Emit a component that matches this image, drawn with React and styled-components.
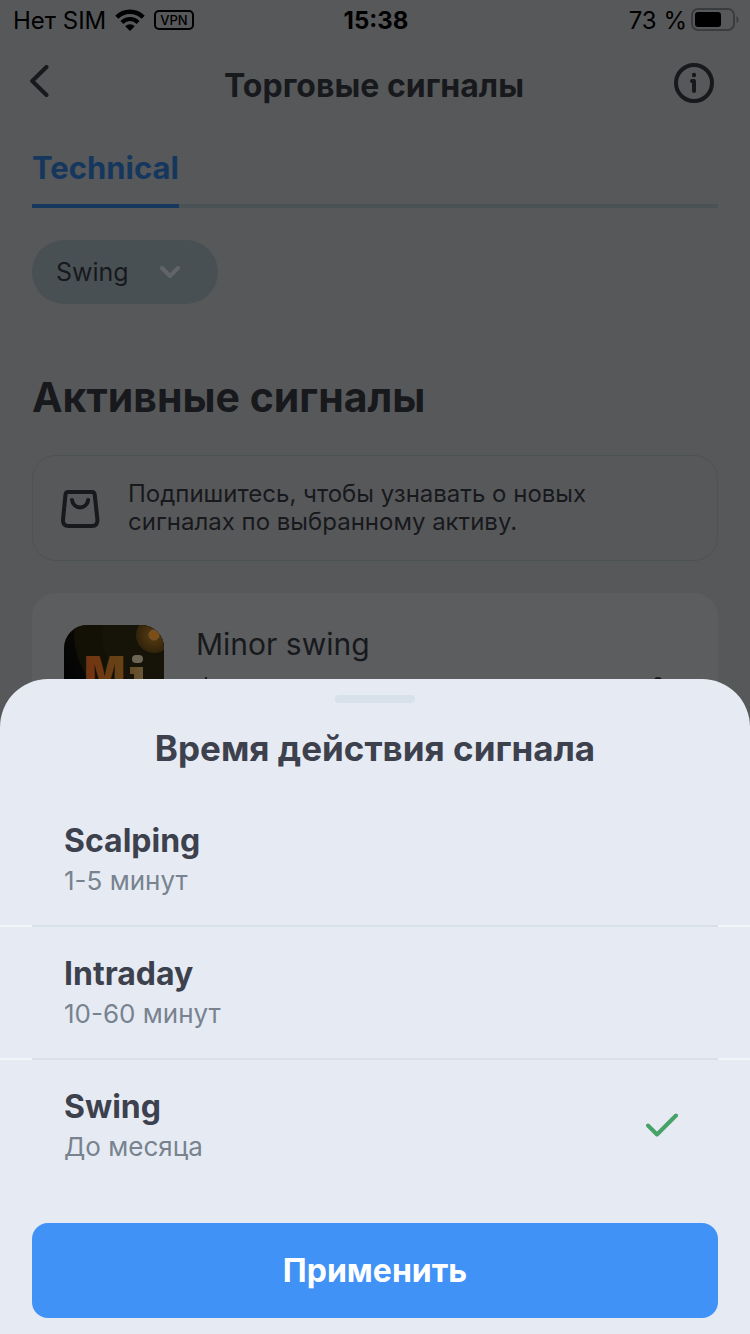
import React, { useState } from "react";
import styled, { createGlobalStyle } from "styled-components";

const GlobalStyle = createGlobalStyle`
  *, *::before, *::after { box-sizing: border-box; }
  html, body { margin: 0; padding: 0; background: #57585a; }
  body { font-family: Inter, "Noto Sans", sans-serif; color: #17191d; }
  h1, h2, h3, p { margin: 0; }
  button, select { font-family: inherit; }
`;

const Screen = styled.div`
  height: 100vh;
  overflow: hidden;
  display: flex;
  flex-direction: column;
`;

const StatusBar = styled.div`
  display: grid;
  grid-template-columns: 1fr auto 1fr;
  align-items: center;
  height: 40px;
  padding: 0 11px 0 13px;
  color: #000;
  font-size: 24px;
  line-height: 30px;
`;

const StatusGroup = styled.div`
  display: flex;
  align-items: center;
  justify-content: ${(p) => (p.$end ? "flex-end" : "flex-start")};
  gap: ${(p) => (p.$end ? 4 : 9)}px;

  span {
    padding-top: 1px;
  }
`;

const Clock = styled.time`
  padding-top: 1px;
  font-weight: 700;
`;

const VpnBadge = styled.b`
  display: flex;
  align-items: center;
  height: 20px;
  padding: 0 4px;
  border: 2px solid #000;
  border-radius: 5px;
  font-size: 13px;
  font-weight: 500;
`;

const Header = styled.header`
  display: grid;
  grid-template-columns: 48px 1fr 48px;
  align-items: center;
  height: 86px;
  padding: 0 32px 0 30px;
`;

const IconButton = styled.button`
  display: flex;
  align-items: center;
  justify-content: ${(p) => (p.$end ? "flex-end" : "flex-start")};
  height: 48px;
  padding: 0 4px 0 0;
  border: 0;
  background: none;
  color: #17191d;

  svg {
    flex: none;
  }
`;

const PageTitle = styled.h1`
  padding-top: 5px;
  text-align: center;
  font-size: 32px;
  line-height: 40px;
  font-weight: 700;
`;

const Tabs = styled.nav`
  display: flex;
  margin: 0 32px;
  height: 82px;
  box-shadow: inset 0 -4px #4b5255;
`;

const Tab = styled.a`
  display: flex;
  align-items: center;
  padding-top: 6px;
  border-bottom: 4px solid #15375e;
  color: #15375e;
  font-size: 31px;
  line-height: 40px;
  font-weight: 700;
  text-decoration: none;
`;

const Filter = styled.label`
  display: grid;
  align-items: center;
  width: 186px;
  height: 64px;
  margin: 32px 32px 0;
  border-radius: 32px;
  background: #495054;

  select,
  svg {
    grid-area: 1 / 1;
  }

  svg {
    justify-self: end;
    margin-right: 37px;
    pointer-events: none;
  }
`;

const FilterSelect = styled.select`
  appearance: none;
  width: 100%;
  height: 64px;
  padding: 0 24px;
  border: 0;
  border-radius: 32px;
  background: none;
  color: #17191d;
  font-size: 25px;
`;

const SectionTitle = styled.h2`
  margin: 68px 32px 32px;
  font-size: 41px;
  line-height: 51px;
  font-weight: 700;
`;

const Notice = styled.section`
  display: flex;
  align-items: center;
  gap: 28px;
  height: 106px;
  flex: none;
  margin: 0 32px;
  padding: 0 28px;
  border: 1px solid #4c5356;
  border-radius: 24px;
  font-size: 24px;
  line-height: 28px;

  p {
    max-width: 480px;
  }
`;

const SignalCard = styled.article`
  display: flex;
  gap: 32px;
  flex: none;
  height: 164px;
  margin: 32px 32px 0;
  padding: 32px;
  border-radius: 24px;
  background: #5c5d5f;
`;

const SignalBody = styled.div`
  display: flex;
  flex-direction: column;
  gap: 13px;
  flex: 1;
`;

const SignalName = styled.h3`
  font-size: 30px;
  line-height: 39px;
  font-weight: 400;
`;

const SignalMeta = styled.div`
  display: flex;
  justify-content: space-between;
  padding: 0 24px 0 8px;
`;

const Sheet = styled.form`
  position: fixed;
  left: 0;
  right: 0;
  bottom: 0;
  display: flex;
  flex-direction: column;
  padding: 16px 0;
  border-radius: 48px 48px 0 0;
  background: #e6ebf3;
  color: #3d414d;
`;

const Handle = styled.div`
  align-self: center;
  width: 80px;
  height: 8px;
  border-radius: 4px;
  background: #d7e1ea;
`;

const SheetTitle = styled.h2`
  margin: 24px 0;
  text-align: center;
  font-size: 35px;
  line-height: 43px;
  font-weight: 700;
`;

const Options = styled.div`
  display: flex;
  flex-direction: column;
`;

const Divider = styled.div`
  height: 2px;
  padding: 0 32px;
  background: #f2f5f8;

  &::before {
    content: "";
    display: block;
    height: 2px;
    background: #d8e1ea;
  }
`;

const Option = styled.label`
  display: flex;
  align-items: center;
  justify-content: space-between;
  height: 131px;
  padding: 0 72px 0 64px;
  cursor: pointer;
`;

const Radio = styled.input`
  appearance: none;
  position: absolute;
  width: 1px;
  height: 1px;
  margin: 0;
  opacity: 0;
`;

const OptionText = styled.span`
  display: flex;
  flex-direction: column;
`;

const OptionName = styled.span`
  font-size: 32px;
  line-height: 42px;
  font-weight: 700;
`;

const OptionHint = styled.span`
  color: #78838f;
  font-size: 26px;
  line-height: 38px;
`;

const ApplyButton = styled.button`
  height: 95px;
  margin: 32px 32px 0;
  border: 0;
  border-radius: 16px;
  background: #4092f7;
  color: #fff;
  font-size: 32px;
  font-weight: 700;
`;

const WifiIcon = () => (
  <svg width="30" height="22" viewBox="0 0 30 22" aria-hidden="true">
    <path d="M1.8 8.3A18.5 18.5 0 0 1 28.2 8.3" fill="none" stroke="#000" strokeWidth="4.4" />
    <path d="M6.9 13.4A11.4 11.4 0 0 1 23.1 13.4" fill="none" stroke="#000" strokeWidth="4.2" />
    <path d="M15 22L10.2 17.2A6.8 6.8 0 0 1 19.8 17.2Z" fill="#000" />
  </svg>
);

const BatteryIcon = () => (
  <svg width="48" height="24" viewBox="0 0 48 24" aria-hidden="true">
    <rect x="1" y="1" width="42" height="21" rx="6" fill="none" stroke="#3b3c3e" strokeWidth="2" />
    <rect x="4" y="4" width="26" height="15" rx="3" fill="#000" />
    <path d="M45.5 8a4 4 0 0 1 0 7z" fill="#3b3c3e" />
  </svg>
);

const BackIcon = () => (
  <svg width="20" height="36" viewBox="0 0 20 36" aria-hidden="true">
    <path d="M16.5 2L2.2 16L16.5 30" fill="none" stroke="currentColor" strokeWidth="4" strokeLinecap="round" strokeLinejoin="round" />
  </svg>
);

const InfoIcon = () => (
  <svg width="40" height="40" viewBox="0 0 40 40" aria-hidden="true">
    <circle cx="20" cy="20" r="18" fill="none" stroke="currentColor" strokeWidth="4" />
    <circle cx="20" cy="12" r="2.2" fill="currentColor" />
    <path d="M18 18H20V28" fill="none" stroke="currentColor" strokeWidth="4" strokeLinecap="round" strokeLinejoin="round" />
  </svg>
);

const ChevronIcon = () => (
  <svg width="22" height="14" viewBox="0 0 22 14" aria-hidden="true">
    <path d="M3 3L11 11L19 3" fill="none" stroke="#626568" strokeWidth="4" strokeLinecap="round" strokeLinejoin="round" />
  </svg>
);

const BagIcon = () => (
  <svg width="39" height="39" viewBox="0 0 39 39" aria-hidden="true">
    <path d="M7.2 3H31Q33.4 3 33.7 5.5L36.4 30.5Q36.8 37 31 37H7.5Q1.6 37 2 30.5L4.5 5.5Q4.8 3 7.2 3Z" fill="none" stroke="#17191d" strokeWidth="4" strokeLinejoin="round" />
    <path d="M11 11A8.2 8.8 0 0 0 27.2 11" fill="none" stroke="#17191d" strokeWidth="4" strokeLinecap="round" />
  </svg>
);

const SignalLogo = () => (
  <svg width="100" height="100" viewBox="0 0 100 100" role="img" aria-label="Mi">
    <defs>
      <clipPath id="tile">
        <rect width="100" height="100" rx="23" />
      </clipPath>
      <linearGradient id="tileFill" x1="0" y1="0.6" x2="1" y2="0">
        <stop offset="0" stopColor="#020304" />
        <stop offset="1" stopColor="#14120a" />
      </linearGradient>
      <linearGradient id="letters" gradientUnits="userSpaceOnUse" x1="22" y1="40" x2="80" y2="34">
        <stop offset="0" stopColor="#743311" />
        <stop offset="0.6" stopColor="#654317" />
        <stop offset="1" stopColor="#68593a" />
      </linearGradient>
      <radialGradient id="ring">
        <stop offset="0.2" stopColor="#55380f" />
        <stop offset="1" stopColor="#30230b" />
      </radialGradient>
    </defs>
    <g clipPath="url(#tile)">
      <rect width="100" height="100" fill="url(#tileFill)" />
      <circle cx="90" cy="8" r="80" fill="#131106" />
      <circle cx="90" cy="10" r="52" fill="#161308" />
      <circle cx="90" cy="10" r="18" fill="url(#ring)" />
      <circle cx="90" cy="10" r="5" fill="#7d4d14" stroke="#6a5841" />
      <text x="20" y="62" fontSize="43" fontWeight="900" fontFamily="Inter, sans-serif" fill="url(#letters)">M</text>
      <rect x="68" y="30" width="11" height="8" rx="4" fill="#6d6655" />
      <path d="M66 42H79V62H70V49H66Z" fill="url(#letters)" />
    </g>
  </svg>
);

const CheckIcon = () => (
  <svg width="32" height="26" viewBox="0 0 32 26" aria-hidden="true">
    <path d="M2 12.5L11 21.5L30 2.5" fill="none" stroke="#46a267" strokeWidth="4" strokeLinecap="round" strokeLinejoin="round" />
  </svg>
);

const PERIODS = [
  { name: "Scalping", hint: "1-5 минут" },
  { name: "Intraday", hint: "10-60 минут" },
  { name: "Swing", hint: "До месяца" },
];

export default function App() {
  const [period, setPeriod] = useState("Swing");

  return (
    <>
      <GlobalStyle />
      <Screen>
        <StatusBar>
          <StatusGroup>
            <span>Нет SIM</span>
            <WifiIcon />
            <VpnBadge>VPN</VpnBadge>
          </StatusGroup>
          <Clock>15:38</Clock>
          <StatusGroup $end>
            <span>73 %</span>
            <BatteryIcon />
          </StatusGroup>
        </StatusBar>

        <Header>
          <IconButton type="button" aria-label="Назад">
            <BackIcon />
          </IconButton>
          <PageTitle>Торговые сигналы</PageTitle>
          <IconButton type="button" aria-label="Информация" $end>
            <InfoIcon />
          </IconButton>
        </Header>

        <Tabs>
          <Tab href="#technical">Technical</Tab>
        </Tabs>

        <Filter>
          <FilterSelect
            aria-label="Время действия сигнала"
            value={period}
            onChange={(e) => setPeriod(e.target.value)}
          >
            {PERIODS.map((p) => (
              <option key={p.name}>{p.name}</option>
            ))}
          </FilterSelect>
          <ChevronIcon />
        </Filter>

        <SectionTitle>Активные сигналы</SectionTitle>

        <Notice>
          <BagIcon />
          <p>Подпишитесь, чтобы узнавать о новых сигналах по выбранному активу.</p>
        </Notice>

        <SignalCard>
          <SignalLogo />
          <SignalBody>
            <SignalName>Minor swing</SignalName>
            <SignalMeta>
              <svg width="4" height="8" viewBox="0 0 4 8" aria-hidden="true">
                <path d="M2 0V8" stroke="#17191d" strokeWidth="2" />
              </svg>
              <svg width="8" height="8" viewBox="0 0 8 8" aria-hidden="true">
                <circle cx="4" cy="4" r="4" fill="#17191d" />
              </svg>
            </SignalMeta>
          </SignalBody>
        </SignalCard>
      </Screen>

      <Sheet onSubmit={(e) => e.preventDefault()}>
        <Handle />
        <SheetTitle id="sheet-title">Время действия сигнала</SheetTitle>
        <Options role="radiogroup" aria-labelledby="sheet-title">
          {PERIODS.map((p, i) => (
            <React.Fragment key={p.name}>
              {i > 0 && <Divider />}
              <Option>
                <Radio
                  type="radio"
                  name="period"
                  value={p.name}
                  checked={period === p.name}
                  onChange={() => setPeriod(p.name)}
                />
                <OptionText>
                  <OptionName>{p.name}</OptionName>
                  <OptionHint>{p.hint}</OptionHint>
                </OptionText>
                {period === p.name && <CheckIcon />}
              </Option>
            </React.Fragment>
          ))}
        </Options>
        <ApplyButton type="submit">Применить</ApplyButton>
      </Sheet>
    </>
  );
}
